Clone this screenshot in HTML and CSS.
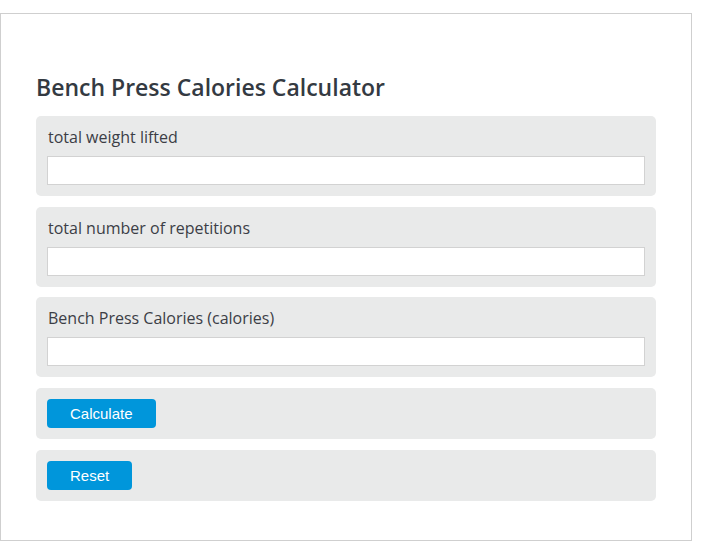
FILE: index.html
```html
<!DOCTYPE html>
<html>
<head>
	<meta name="viewport" content="width=device-width, initial-scale=1">
	<title>Bench Press Calories Calculator</title>
	<link rel="stylesheet" href="styles.css">
</head>
<body>

<div class="calc-frame">
	<h2 class="calc-title">Bench Press Calories Calculator</h2>

	<div class="calc-row">
		<label class="calc-label" for="weight">total weight lifted</label>
		<input class="calc-input" type="text" id="weight">
	</div>

	<div class="calc-row">
		<label class="calc-label" for="reps">total number of repetitions</label>
		<input class="calc-input" type="text" id="reps">
	</div>

	<div class="calc-row">
		<label class="calc-label" for="result">Bench Press Calories (calories)</label>
		<input class="calc-input" type="text" id="result">
	</div>

	<div class="calc-row btn-row">
		<button class="calc-btn" type="button">Calculate</button>
	</div>

	<div class="calc-row btn-row">
		<button class="calc-btn" type="button">Reset</button>
	</div>
</div>

</body>
</html>
```

FILE: styles.css
```css
* {
	box-sizing: border-box;
}

body {
	margin: 0;
	background: white;
	font-family: "Open Sans", sans-serif;
	color: #3a3a3a;
}

/* outer frame round the calculator */
.calc-frame {
	width: 692px;
	height: 528px;
	margin-top: 13px;
	padding: 58px 35px 0 35px;
	border: 1px solid #cfcfcf;
}

.calc-title {
	margin: 0 0 14px 0;
	font-size: 23px;
	line-height: 30px;
	font-weight: 600;
	color: #343a42;
}

.calc-row {
	display: flex;
	flex-direction: column;
	margin-bottom: 10.67px;
	padding: 11px;
	background: #e9eaea;
	border-radius: 5px;
}

.calc-label {
	padding-left: 1px;
	margin-bottom: 9px;
	font-size: 16px;
	line-height: 20px;
	color: #3c3e46;
}

.calc-input {
	height: 29px;
	border: 1px solid #d2d2d2;
	background: white;
	font-size: 14px;
}

.btn-row {
	flex-direction: row;
	margin-bottom: 11px;
}

.calc-btn {
	height: 29px;
	padding: 0 23px;
	border: none;
	border-radius: 4px;
	background: #0096db;
	color: white;
	font-family: "Liberation Sans", Arial, sans-serif;
	font-size: 15px;
	cursor: pointer;
}
```
